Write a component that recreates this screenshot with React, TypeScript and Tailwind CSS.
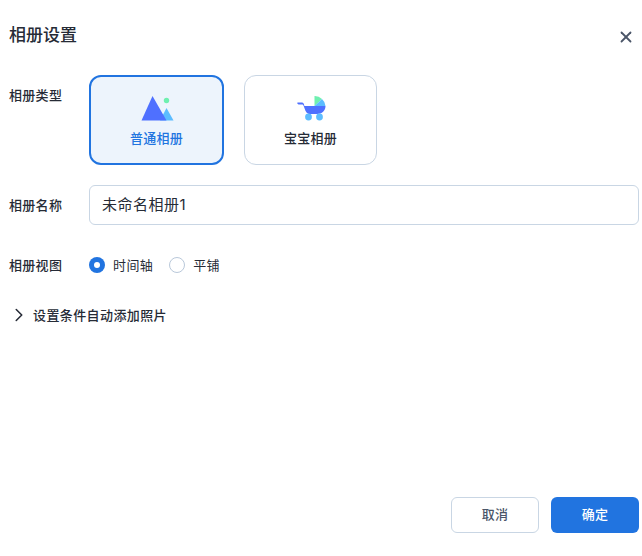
import { ChevronRight, X } from "lucide-react";

const FONT = "font-['Inter','Noto_Sans_CJK_SC',sans-serif]";

function MountainIcon() {
  return (
    <svg width="34" height="26" viewBox="0 0 34 26">
      <path d="M26.5 12 L33.5 24.5 L20 24.5 Z" fill="#5cbcff" />
      <path d="M12.5 0 L26.5 24.5 L1.5 24.5 Z" fill="#4f70ff" />
      <circle cx="26.5" cy="4.5" r="2.7" fill="#6ff0b0" />
    </svg>
  );
}

function StrollerIcon() {
  return (
    <svg width="30" height="26" viewBox="0 0 30 26">
      <path d="M18.5 10 V0 A10.5 10.5 0 0 1 26 3 Z" fill="#6ff0b0" />
      <path d="M18.5 10 L26 3 A10.5 10.5 0 0 1 29.5 10 Z" fill="#5cbcff" />
      <path
        d="M1.5 6.6 H6 C7.3 6.6 7.8 7.5 8.4 10 H29.5 C29.5 14.5 26 18 21 18 H14 C11 18 9.6 15.5 8.6 12.5 L7.5 9.6 C7.2 8.8 6.8 8.4 6 8.4 H2.5 C1.5 8.4 1 7.2 1.5 6.6 Z"
        fill="#4f70ff"
      />
      <circle cx="12.5" cy="21" r="3.4" fill="#5cbcff" />
      <circle cx="23.5" cy="21" r="3.4" fill="#5cbcff" />
    </svg>
  );
}

export default function App() {
  return (
    <div className={`flex h-[556px] w-[642px] flex-col bg-white pl-[9px] pr-[3px] text-[#262b36] ${FONT}`}>
      <div className="flex h-[75px] items-start justify-between">
        <h1 className="mt-[25px] text-[17px] leading-5 font-medium">相册设置</h1>
        <X size={18} strokeWidth={2.4} className="mt-[28px] mr-[4px] text-[#4a5568]" />
      </div>

      <div className="flex">
        <span className="mt-[10px] w-[80px] text-[13px] leading-5 font-medium tracking-[0.3px]">相册类型</span>
        <div className="flex gap-5">
          <div className="flex h-[90px] w-[135px] flex-col items-center rounded-xl border-2 border-[#2174e0] bg-[#edf4fc] pt-[19px]">
            <MountainIcon />
            <span className="mt-[6px] text-[13px] leading-5 font-medium tracking-[0.3px] text-[#2174e0]">普通相册</span>
          </div>
          <div className="flex h-[90px] w-[133px] flex-col items-center rounded-xl border border-[#c9d6e4] bg-white pt-[20px]">
            <StrollerIcon />
            <span className="mt-[6px] text-[13px] leading-5 font-medium tracking-[0.3px]">宝宝相册</span>
          </div>
        </div>
      </div>

      <div className="mt-5 flex items-center">
        <span className="w-[80px] text-[13px] leading-5 font-medium tracking-[0.3px]">相册名称</span>
        <div className="flex h-10 flex-1 items-center rounded-md border border-[#c9d6e4] px-3 text-[15px] tracking-[0.5px]">
          未命名相册1
        </div>
      </div>

      <div className="mt-[30px] flex h-5 items-center">
        <span className="w-[80px] text-[13px] leading-5 font-medium tracking-[0.3px]">相册视图</span>
        <span className="flex h-4 w-4 items-center justify-center rounded-full bg-[#2174e0]">
          <span className="h-1.5 w-1.5 rounded-full bg-white" />
        </span>
        <span className="ml-2 text-[13px] leading-5 tracking-[0.4px]">时间轴</span>
        <span className="ml-4 h-4 w-4 rounded-full border border-[#b9c8da]" />
        <span className="ml-2 text-[13px] leading-5 tracking-[0.4px]">平铺</span>
      </div>

      <div className="mt-[30px] flex h-5 items-center">
        <ChevronRight size={22} strokeWidth={1.7} className="ml-[-1.5px]" />
        <span className="ml-[3.5px] text-[13px] leading-5 font-medium tracking-[0.4px]">设置条件自动添加照片</span>
      </div>

      <div className="mt-auto mb-[23px] flex justify-end gap-3">
        <button className="h-9 w-[88px] rounded-md border border-[#c9d6e4] bg-white text-[13px] font-medium tracking-[0.3px] text-[#4a5568]">
          取消
        </button>
        <button className="h-9 w-[88px] rounded-md bg-[#2174e0] text-[13px] font-medium tracking-[0.3px] text-white">确定</button>
      </div>
    </div>
  );
}
